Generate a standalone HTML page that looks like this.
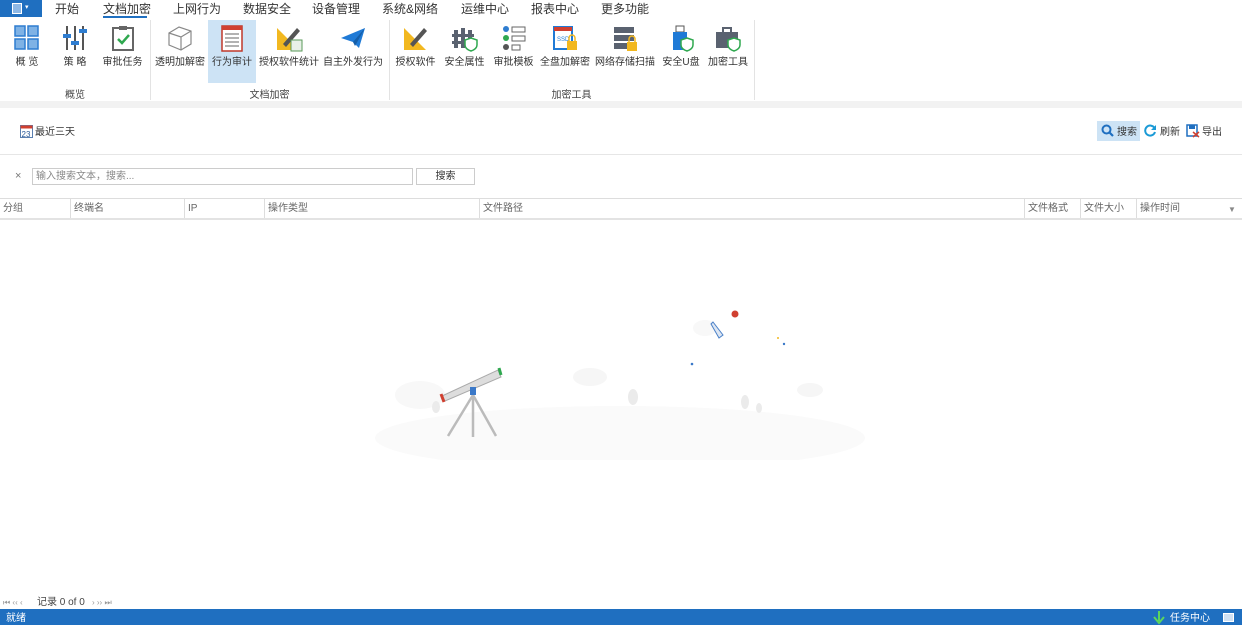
<!DOCTYPE html>
<html><head><meta charset="utf-8"><style>
*{margin:0;padding:0;box-sizing:border-box}
body{width:1242px;height:625px;position:relative;background:#fff;font-family:"Liberation Sans","Noto Sans CJK SC",sans-serif;color:#333;overflow:hidden;font-size:11px;line-height:1.2}
.a{position:absolute}
.tab{position:absolute;top:2px;font-size:12px;color:#333}
.it{position:absolute;top:20px;height:63px;text-align:center;font-size:10px;color:#333}
.it .ic{position:absolute;left:50%;top:4px;transform:translateX(-50%);width:28px;height:28px}
.it .lb{position:absolute;top:37px;left:0;right:0;white-space:nowrap}
.grp{position:absolute;top:90px;font-size:10px;color:#444;text-align:center}
.sep{position:absolute;top:20px;height:80px;width:1px;background:#e3e3e3}
.th{position:absolute;top:199px;height:19px;border-left:1px solid #ddd;font-size:10px;color:#666;padding:4px 0 0 3px;white-space:nowrap}
</style></head><body>
<div class="a" style="left:0;top:0;width:42px;height:17px;background:#1f6fc0"></div>
<div class="a" style="left:12px;top:3px;width:10px;height:11px;border:1px solid #fff;background:#8db8e6"></div>
<div class="a" style="left:25px;top:4px;color:#fff;font-size:7px">▾</div>
<div class="tab" style="left:55px">开始</div>
<div class="tab" style="left:103px">文档加密</div>
<div class="a" style="left:103px;top:16px;width:44px;height:2px;background:#1f6fc0"></div>
<div class="tab" style="left:173px">上网行为</div>
<div class="tab" style="left:243px">数据安全</div>
<div class="tab" style="left:312px">设备管理</div>
<div class="tab" style="left:382px">系统&amp;网络</div>
<div class="tab" style="left:461px">运维中心</div>
<div class="tab" style="left:531px">报表中心</div>
<div class="tab" style="left:601px">更多功能</div>
<div class="a" style="left:0;top:101px;width:1242px;height:7px;background:#f2f2f2"></div>
<div class="a" style="left:208px;top:20px;width:48px;height:63px;background:#cde3f5"></div>
<div class="sep" style="left:150px"></div><div class="sep" style="left:389px"></div><div class="sep" style="left:754px"></div>
<div class="grp" style="left:0;width:150px">概览</div>
<div class="grp" style="left:150px;width:239px">文档加密</div>
<div class="grp" style="left:389px;width:365px">加密工具</div>

<div class="it" style="left:7px;width:40px"><svg class="ic" viewBox="0 0 28 28"><g fill="#7fb2e5" stroke="#2f7dd0" stroke-width="1.5"><rect x="2" y="2" width="10" height="10"/><rect x="15" y="2" width="10" height="10"/><rect x="2" y="15" width="10" height="10"/><rect x="15" y="15" width="10" height="10"/></g></svg><div class="lb">概 览</div></div>
<div class="it" style="left:55px;width:40px"><svg class="ic" viewBox="0 0 28 28"><g stroke="#555" stroke-width="2"><line x1="6" y1="2" x2="6" y2="26"/><line x1="14" y1="2" x2="14" y2="26"/><line x1="22" y1="2" x2="22" y2="26"/></g><g fill="#2f7dd0"><rect x="2" y="10" width="8" height="4"/><rect x="10" y="17" width="8" height="4"/><rect x="18" y="5" width="8" height="4"/></g></svg><div class="lb">策 略</div></div>
<div class="it" style="left:100px;width:45px"><svg class="ic" viewBox="0 0 28 28"><rect x="4" y="4" width="20" height="22" fill="#fff" stroke="#666" stroke-width="2"/><rect x="10" y="2" width="8" height="4" fill="#666"/><path d="M9 15l4 4 7-8" stroke="#2fa84f" stroke-width="2.5" fill="none"/></svg><div class="lb">审批任务</div></div>
<div class="it" style="left:154px;width:52px"><svg class="ic" viewBox="0 0 28 28"><g fill="none" stroke="#888" stroke-width="1.2"><path d="M3 9l10-6 12 4v13l-10 6-12-5z"/><path d="M3 9l12 4 10-6M15 13v13"/></g></svg><div class="lb">透明加解密</div></div>
<div class="it" style="left:208px;width:48px"><svg class="ic" viewBox="0 0 28 28"><rect x="4" y="2" width="20" height="25" fill="#fff" stroke="#c0392b" stroke-width="1.5"/><rect x="4" y="2" width="20" height="4" fill="#d04030"/><g stroke="#888" stroke-width="1.3"><line x1="7" y1="10" x2="21" y2="10"/><line x1="7" y1="14" x2="21" y2="14"/><line x1="7" y1="18" x2="21" y2="18"/><line x1="7" y1="22" x2="21" y2="22"/></g></svg><div class="lb">行为审计</div></div>
<div class="it" style="left:258px;width:62px"><svg class="ic" viewBox="0 0 28 28"><path d="M2 4v22h22z" fill="#f2b820"/><path d="M8 20L22 4l3 3-14 16z" fill="#555"/><rect x="16" y="16" width="11" height="11" fill="#e8f0e8" stroke="#5a9a5a"/></svg><div class="lb">授权软件统计</div></div>
<div class="it" style="left:322px;width:62px"><svg class="ic" viewBox="0 0 28 28"><path d="M2 14L26 4 20 24 14 18z" fill="#1f7ad6"/><path d="M14 18l12-14-10 18z" fill="#155ea8"/></svg><div class="lb">自主外发行为</div></div>
<div class="it" style="left:393px;width:45px"><svg class="ic" viewBox="0 0 28 28"><path d="M2 4v22h22z" fill="#f2b820"/><path d="M8 20L22 4l3 3-14 16z" fill="#555"/></svg><div class="lb">授权软件</div></div>
<div class="it" style="left:442px;width:45px"><svg class="ic" viewBox="0 0 28 28"><g fill="#5a6270"><rect x="3" y="6" width="4" height="18"/><rect x="10" y="4" width="4" height="20"/><rect x="17" y="6" width="4" height="18"/><rect x="1" y="10" width="22" height="3"/><rect x="1" y="17" width="22" height="3"/></g><path d="M20 14l6 2v5c0 3-3 5-6 6-3-1-6-3-6-6v-5z" fill="#fff" stroke="#2fa84f" stroke-width="1.5"/></svg><div class="lb">安全属性</div></div>
<div class="it" style="left:491px;width:45px"><svg class="ic" viewBox="0 0 28 28"><g fill="#2f7dd0"><circle cx="6" cy="5" r="3"/></g><g fill="#2fa84f"><circle cx="6" cy="14" r="3"/></g><g fill="#555"><circle cx="6" cy="23" r="3"/></g><g fill="none" stroke="#666"><rect x="12" y="3" width="13" height="5"/><rect x="12" y="12" width="13" height="5"/><rect x="12" y="21" width="8" height="5"/></g></svg><div class="lb">审批模板</div></div>
<div class="it" style="left:540px;width:50px"><svg class="ic" viewBox="0 0 28 28"><rect x="3" y="3" width="18" height="22" fill="#fff" stroke="#1f7ad6" stroke-width="2"/><rect x="3" y="3" width="18" height="4" fill="#d04030"/><text x="6" y="17" font-size="6" fill="#1f7ad6" font-family="Liberation Sans">SSD</text><rect x="16" y="17" width="10" height="9" fill="#f2b820"/><path d="M18 17v-3a3 3 0 0 1 6 0v3" fill="none" stroke="#f2b820" stroke-width="1.5"/></svg><div class="lb">全盘加解密</div></div>
<div class="it" style="left:594px;width:62px"><svg class="ic" viewBox="0 0 28 28"><g fill="#5a6270"><rect x="3" y="3" width="20" height="6"/><rect x="3" y="11" width="20" height="6"/><rect x="3" y="19" width="20" height="6"/></g><rect x="16" y="18" width="10" height="9" fill="#f2b820"/><path d="M18 18v-3a3 3 0 0 1 6 0v3" fill="none" stroke="#f2b820" stroke-width="1.5"/></svg><div class="lb">网络存储扫描</div></div>
<div class="it" style="left:660px;width:42px"><svg class="ic" viewBox="0 0 28 28"><rect x="9" y="2" width="8" height="6" fill="#fff" stroke="#555"/><rect x="6" y="8" width="14" height="18" fill="#1f7ad6"/><path d="M20 14l6 2v5c0 3-3 5-6 6-3-1-6-3-6-6v-5z" fill="#fff" stroke="#2fa84f" stroke-width="1.5"/></svg><div class="lb">安全U盘</div></div>
<div class="it" style="left:706px;width:44px"><svg class="ic" viewBox="0 0 28 28"><rect x="2" y="8" width="22" height="16" fill="#5a6270"/><rect x="9" y="4" width="8" height="5" fill="none" stroke="#5a6270" stroke-width="2"/><path d="M20 14l6 2v5c0 3-3 5-6 6-3-1-6-3-6-6v-5z" fill="#fff" stroke="#2fa84f" stroke-width="1.5"/></svg><div class="lb">加密工具</div></div>

<svg class="a" style="left:20px;top:125px" width="13" height="13" viewBox="0 0 13 13"><rect x=".5" y=".5" width="12" height="12" fill="#fff" stroke="#5a7fb0"/><rect x=".5" y=".5" width="12" height="3" fill="#d04030"/><text x="1.5" y="12" font-size="8" fill="#2a5a9a" font-family="Liberation Sans">23</text></svg>
<div class="a" style="left:35px;top:127px;font-size:10px">最近三天</div>
<div class="a" style="left:1097px;top:121px;width:43px;height:20px;background:#cde3f5"></div>
<svg class="a" style="left:1101px;top:124px" width="13" height="13" viewBox="0 0 13 13"><circle cx="5.5" cy="5.5" r="4" fill="none" stroke="#1f6fc0" stroke-width="2"/><line x1="8.5" y1="8.5" x2="12" y2="12" stroke="#1f6fc0" stroke-width="2.2"/></svg>
<div class="a" style="left:1117px;top:127px;font-size:10px">搜索</div>
<svg class="a" style="left:1144px;top:124px" width="13" height="13" viewBox="0 0 13 13"><path d="M10.5 4A5 5 0 1 0 11 8" fill="none" stroke="#1a9ad6" stroke-width="2"/><path d="M12 1v5H7z" fill="#1a9ad6"/></svg>
<div class="a" style="left:1160px;top:127px;font-size:10px">刷新</div>
<svg class="a" style="left:1186px;top:124px" width="14" height="14" viewBox="0 0 14 14"><rect x="1" y="1" width="10" height="11" fill="#fff" stroke="#1f6fc0" stroke-width="1.5"/><rect x="3" y="1" width="6" height="4" fill="#1f6fc0"/><path d="M7 8l6 5M13 8l-6 5" stroke="#d04030" stroke-width="1.5"/></svg>
<div class="a" style="left:1202px;top:127px;font-size:10px">导出</div>
<div class="a" style="left:0;top:154px;width:1242px;height:1px;background:#e6e6e6"></div>
<div class="a" style="left:15px;top:170px;font-size:11px;color:#777">×</div>
<div class="a" style="left:32px;top:168px;width:381px;height:17px;border:1px solid #ccc;font-size:10px;color:#888;padding:2px 0 0 3px">输入搜索文本，搜索...</div>
<div class="a" style="left:416px;top:168px;width:59px;height:17px;border:1px solid #ccc;font-size:10px;text-align:center;padding-top:2px">搜索</div>
<div class="a" style="left:0;top:198px;width:1242px;height:1px;background:#ddd"></div>
<div class="a" style="left:0;top:218px;width:1242px;height:2px;background:#e3e3e3"></div>
<div class="th" style="left:0;border-left:none">分组</div>
<div class="th" style="left:70px">终端名</div>
<div class="th" style="left:184px">IP</div>
<div class="th" style="left:264px">操作类型</div>
<div class="th" style="left:479px">文件路径</div>
<div class="th" style="left:1024px">文件格式</div>
<div class="th" style="left:1080px">文件大小</div>
<div class="th" style="left:1136px">操作时间</div>
<div class="a" style="left:1228px;top:205px;font-size:8px;color:#888">▼</div>
<svg class="a" style="left:370px;top:300px" width="500" height="160" viewBox="0 0 500 160">
<ellipse cx="250" cy="138" rx="245" ry="32" fill="#fafafa"/>
<ellipse cx="50" cy="95" rx="25" ry="14" fill="#f8f8f8"/>
<ellipse cx="220" cy="77" rx="17" ry="9" fill="#f6f6f6"/>
<ellipse cx="440" cy="90" rx="13" ry="7" fill="#f6f6f6"/>
<ellipse cx="335" cy="28" rx="12" ry="8" fill="#f8f8f8"/>
<g fill="#ebebeb"><ellipse cx="263" cy="97" rx="5" ry="8"/><ellipse cx="375" cy="102" rx="4" ry="7"/><ellipse cx="389" cy="108" rx="3" ry="5"/><ellipse cx="66" cy="107" rx="4" ry="6"/></g>
<g stroke="#bbb" stroke-width="2.5"><line x1="103" y1="95" x2="78" y2="136"/><line x1="103" y1="95" x2="103" y2="137"/><line x1="103" y1="95" x2="126" y2="136"/></g>
<path d="M72 96L128 70 131 77 75 101z" fill="#ddd" stroke="#aaa"/>
<rect x="100" y="87" width="6" height="8" fill="#3a78c8"/>
<path d="M71 94l3 8" stroke="#d04030" stroke-width="3"/>
<path d="M129 68l2 7" stroke="#2fa84f" stroke-width="3"/>
<circle cx="365" cy="14" r="3.5" fill="#d04030"/>
<path d="M343 22l10 13-4 3-8-14z" fill="#dde6f2" stroke="#4a80c8"/>
<circle cx="322" cy="64" r="1.3" fill="#3a78c8"/><circle cx="414" cy="44" r="1.2" fill="#3a78c8"/><circle cx="408" cy="38" r="1" fill="#f2b820"/>
</svg>
<div class="a" style="left:3px;top:598px;font-size:8px;color:#999">⏮ ‹‹ ‹</div>
<div class="a" style="left:37px;top:597px;font-size:10px;color:#444">记录 0 of 0</div>
<div class="a" style="left:92px;top:598px;font-size:8px;color:#999">› ›› ⏭</div>
<div class="a" style="left:0;top:609px;width:1242px;height:16px;background:#1f6fc0"></div>
<div class="a" style="left:6px;top:613px;font-size:10px;color:#fff">就绪</div>
<svg class="a" style="left:1153px;top:611px" width="12" height="14" viewBox="0 0 12 14"><path d="M6 0v10M1 6l5 6 5-6" stroke="#5cd65c" stroke-width="2" fill="none"/></svg>
<div class="a" style="left:1170px;top:613px;font-size:10px;color:#fff">任务中心</div>
<div class="a" style="left:1223px;top:613px;width:11px;height:9px;border:1px solid #fff;background:#cfe0f3"></div>
</body></html>
